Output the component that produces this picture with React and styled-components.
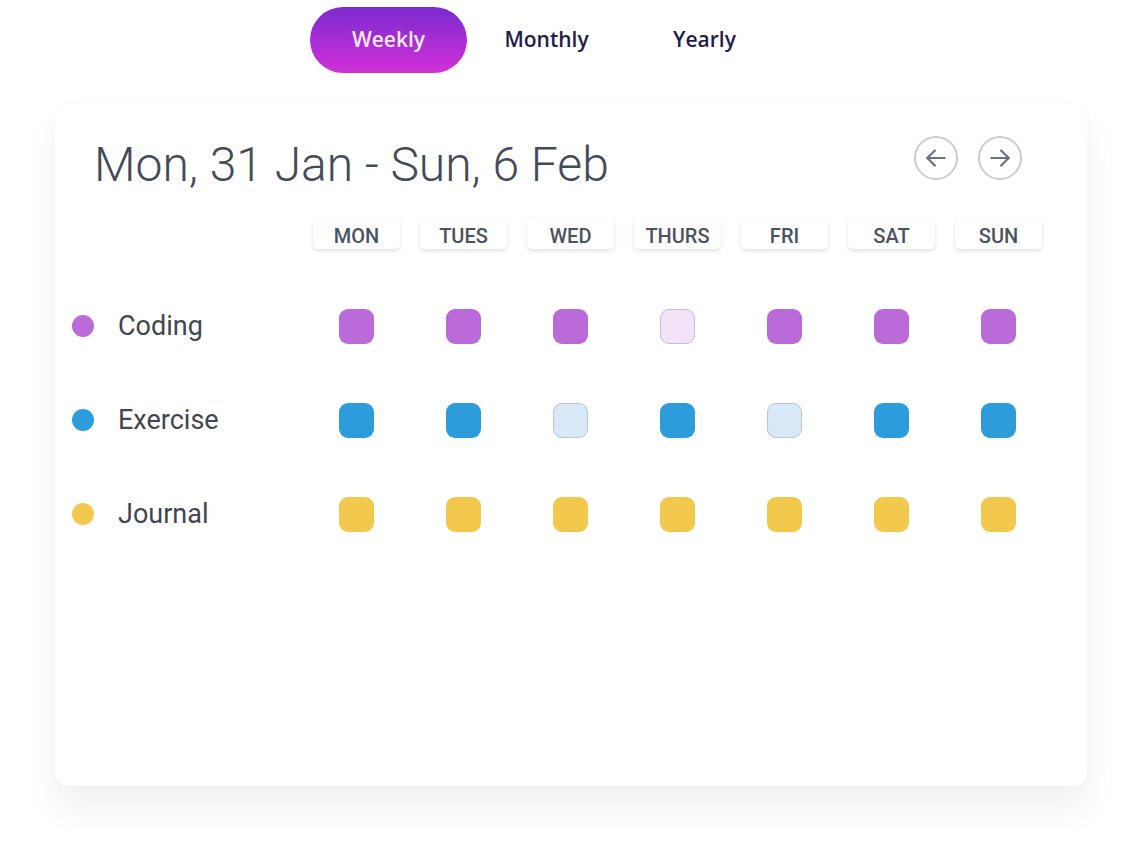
import styled, { createGlobalStyle } from "styled-components"

const GlobalStyle = createGlobalStyle`
    * { box-sizing: border-box; }
    body {
        margin: 0;
        background: #FFFFFF;
        font-family: "Roboto", sans-serif;
    }
`

const StyledPage = styled.main`
    width: 1141px;
    height: 841px;
    overflow: hidden;
`
const StyledTabs = styled.nav`
    display: flex;
    padding: 7px 0 0 310px;
    gap: 1px;
`
const StyledTab = styled.button`
    width: 157px;
    height: 66px;
    border: none;
    border-radius: 33px;
    padding: 0 0 2px;
    font-family: "Open Sans", sans-serif;
    font-size: 21px;
    font-weight: 600;
    color: ${({ $active }) => ($active ? "#F4EAFB" : "#1F1D47")};
    background: ${({ $active }) =>
        $active ? "linear-gradient(180deg, #7A2ACF 0%, #D331D8 100%)" : "transparent"};
    cursor: pointer;
`
const StyledCard = styled.section`
    margin: 32px 0 0 55px;
    width: 1032px;
    height: 681px;
    background: #FFFFFF;
    border-radius: 14px;
    box-shadow: 0 22px 36px rgba(0, 0, 0, 0.06), 0 0 12px rgba(0, 0, 0, 0.02);
    padding: 28px 65px 0 17px;
`
const StyledHeader = styled.header`
    display: flex;
    align-items: flex-start;
    justify-content: space-between;
    padding-left: 22px;
`
const StyledTitle = styled.h1`
    margin: 0;
    font-family: "Roboto", sans-serif;
    font-size: 48px;
    font-weight: 300;
    line-height: 64px;
    color: #434A58;
`
const StyledArrows = styled.div`
    display: flex;
    gap: 20px;
    padding-top: 3px;
`
const StyledArrowButton = styled.button`
    width: 44px;
    height: 44px;
    border-radius: 50%;
    border: 2px solid #CCCCCC;
    background: #FFFFFF;
    display: flex;
    align-items: center;
    justify-content: center;
    padding: 0;
    cursor: pointer;
`
const StyledGrid = styled.div`
    display: grid;
    grid-template-columns: 231px repeat(7, 107px);
    grid-template-rows: 61px repeat(3, 94px);
    margin-top: 21px;
`
const StyledRow = styled.div`
    display: contents;
`
const StyledDayCell = styled.div`
    display: flex;
    justify-content: center;
    align-items: flex-start;
`
const StyledDay = styled.div`
    width: 87px;
    height: 31px;
    border-radius: 5px;
    background: #FFFFFF;
    box-shadow: 0 2px 4px rgba(0, 0, 0, 0.12);
    display: flex;
    align-items: center;
    justify-content: center;
    padding-top: 4px;
    font-family: "Roboto", sans-serif;
    font-weight: 500;
    font-size: 20px;
    color: #4B5361;
`
const StyledLabel = styled.div`
    display: flex;
    align-items: center;
    gap: 24px;
    font-size: 27px;
    color: #414650;
`
const StyledDot = styled.span`
    width: 22px;
    height: 22px;
    border-radius: 50%;
    background: ${({ $color }) => $color};
`
const StyledCellWrap = styled.div`
    display: flex;
    justify-content: center;
    align-items: center;
`
const StyledMark = styled.div`
    width: 35px;
    height: 35px;
    border-radius: 9px;
    background: ${({ $done, $color, $light }) => ($done ? $color : $light)};
    border: ${({ $done }) => ($done ? "none" : "1px solid #BFC2C9")};
`

const days = ["MON", "TUES", "WED", "THURS", "FRI", "SAT", "SUN"]

const habits = [
    { name: "Coding", color: "#BB6AD9", light: "#F3E3F8", done: [1, 1, 1, 0, 1, 1, 1] },
    { name: "Exercise", color: "#2D9CDB", light: "#D8EAF8", done: [1, 1, 0, 1, 0, 1, 1] },
    { name: "Journal", color: "#F2C94C", light: "#FBF0CC", done: [1, 1, 1, 1, 1, 1, 1] },
]

const Arrow = ({ left }) => (
    <svg width="26" height="26" viewBox="0 0 24 24" fill="none" stroke="#6B7280" strokeWidth="2" strokeLinecap="round" strokeLinejoin="round">
        {left ? (
            <>
                <path d="M20 12H4" />
                <path d="M11 5l-7 7 7 7" />
            </>
        ) : (
            <>
                <path d="M4 12h16" />
                <path d="M13 5l7 7-7 7" />
            </>
        )}
    </svg>
)

const App = () => {
    return (
        <StyledPage>
            <GlobalStyle />
            <StyledTabs>
                <StyledTab $active>Weekly</StyledTab>
                <StyledTab>Monthly</StyledTab>
                <StyledTab>Yearly</StyledTab>
            </StyledTabs>
            <StyledCard>
                <StyledHeader>
                    <StyledTitle>Mon, 31 Jan - Sun, 6 Feb</StyledTitle>
                    <StyledArrows>
                        <StyledArrowButton aria-label="Previous week"><Arrow left /></StyledArrowButton>
                        <StyledArrowButton aria-label="Next week"><Arrow /></StyledArrowButton>
                    </StyledArrows>
                </StyledHeader>
                <StyledGrid>
                    <StyledRow>
                        <div />
                        {days.map((d) => (
                            <StyledDayCell key={d}>
                                <StyledDay>{d}</StyledDay>
                            </StyledDayCell>
                        ))}
                    </StyledRow>
                    {habits.map((h) => (
                        <StyledRow key={h.name}>
                            <StyledLabel>
                                <StyledDot $color={h.color} />
                                {h.name}
                            </StyledLabel>
                            {h.done.map((v, i) => (
                                <StyledCellWrap key={i}>
                                    <StyledMark $done={v} $color={h.color} $light={h.light} />
                                </StyledCellWrap>
                            ))}
                        </StyledRow>
                    ))}
                </StyledGrid>
            </StyledCard>
        </StyledPage>
    )
}

export default App
